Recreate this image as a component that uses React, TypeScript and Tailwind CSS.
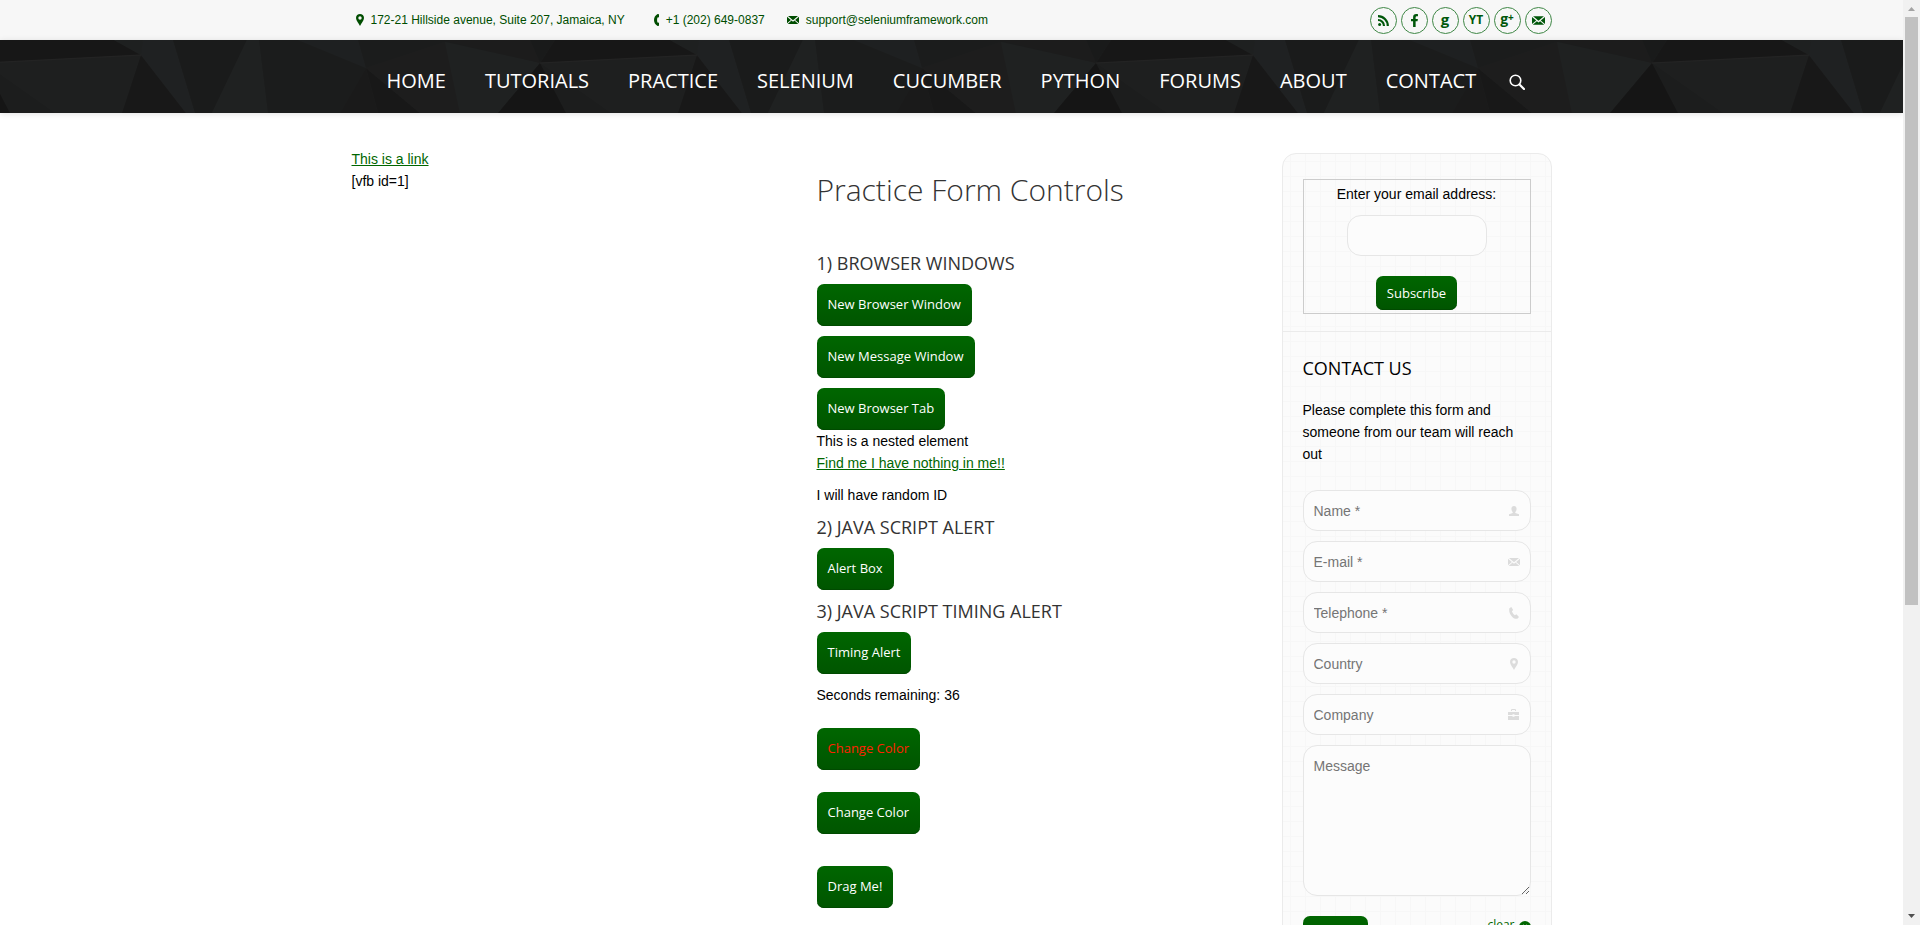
import { useState } from "react";
import type { ReactNode } from "react";
import { FaFacebookF } from "react-icons/fa";

const OPEN = "font-['Open_Sans',sans-serif]";
const BUTTON =
  "block w-fit rounded-[7px] bg-linear-to-b from-[#006600] to-[#005500] px-[11px] font-['Open_Sans',sans-serif] text-[13px] shadow-[inset_0_-1px_0_#004a00]";
const FIELD =
  "block w-full rounded-[14px] border border-[#e6e6e6] bg-[#fcfcfc] px-[10px] text-[14px] leading-[22px] text-black placeholder:text-[#757575] outline-none";

function PinIcon({ className }: { className?: string }) {
  return (
    <svg viewBox="0 0 8 12" className={className} fill="currentColor" aria-hidden="true">
      <path
        fillRule="evenodd"
        d="M4 0C1.8 0 0 1.7 0 3.9 0 6.6 2.8 9 4 12c1.200-3 4-5.400 4-8.100C8 1.700 6.200 0 4 0Zm0 2.300a1.700 1.700 0 1 1 0 3.400 1.700 1.700 0 0 1 0-3.400Z"
      />
    </svg>
  );
}

function MailIcon({ className }: { className?: string }) {
  return (
    <svg viewBox="0 0 12 8" className={className} fill="currentColor" aria-hidden="true">
      <path d="M1 0h10L6 4.200ZM0 .7 3.900 4 0 7.300ZM12 .7v6.600L8.100 4ZM4.500 4.600 6 5.800l1.500-1.200L11.300 8H.7Z" />
    </svg>
  );
}

function HandsetIcon({ className }: { className?: string }) {
  return (
    <svg viewBox="0 0 5 12" className={className} fill="currentColor" aria-hidden="true">
      <path d="M3.600 0 5 .300v2.900L3.500 3.400c-.6 1.700-.6 3.500 0 5.200l1.500.2v2.900l-1.400.3C-1.200 9.500-1.200 2.500 3.600 0Z" />
    </svg>
  );
}

function PhoneIcon({ className }: { className?: string }) {
  return (
    <svg viewBox="0 0 10 12" className={className} fill="currentColor" aria-hidden="true">
      <path d="M.4 1.200 2.300 0l1.900 3-1.300 1.200c.5 1.500 1.600 3 3 4l1.500-.9L10 10l-1.600 1.700C4.500 13-1 6.500.4 1.200Z" />
    </svg>
  );
}

function PersonIcon({ className }: { className?: string }) {
  return (
    <svg viewBox="0 0 10 10" className={className} fill="currentColor" aria-hidden="true">
      <path d="M5 0c1.700 0 2.600 1.200 2.600 2.800 0 1.500-.7 2.600-1.300 3.200v.9L10 8.300V10H0V8.300l3.700-1.400V6C3.100 5.400 2.400 4.300 2.400 2.800 2.400 1.200 3.300 0 5 0Z" />
    </svg>
  );
}

function CaseIcon({ className }: { className?: string }) {
  return (
    <svg viewBox="0 0 11 11" className={className} fill="currentColor" aria-hidden="true">
      <path fillRule="evenodd" d="M3 2V.8L3.800 0h3.400L8 .8V2H7V1H4v1ZM0 3h11v3H6.500V5.300h-2V6H0ZM0 7h4.500v.800h2V7H11v4H0Z" />
    </svg>
  );
}

function RssIcon({ className }: { className?: string }) {
  return (
    <svg viewBox="0 0 11 11" className={className} aria-hidden="true">
      <circle cx="1.600" cy="9.400" r="1.500" fill="currentColor" />
      <path d="M0 5a6 6 0 0 1 6 6M0 1.200A9.800 9.800 0 0 1 9.800 11" fill="none" stroke="currentColor" strokeWidth="2.200" />
    </svg>
  );
}

const FACETS: [string, string][] = [
  ["-1,0 114,0 141,15 -16,23", "#171717"],
  ["-16,23 141,15 122,73 55,73", "#1e1f1f"],
  ["-16,23 55,73 10,73", "#1c1d1d"],
  ["-16,23 10,73 -58,73", "#151515"],
  ["141,15 122,73 186,73", "#181818"],
  ["114,0 143,0 141,15", "#1e2020"],
  ["143,0 173,0 195,73 186,73 141,15", "#1f2122"],
  ["173,0 247,0 212,73 195,73", "#1a1b1b"],
  ["247,0 259,0 268,73 212,73", "#1f2121"],
  ["259,0 298,0 366,28 340,73 268,73", "#1b1c1c"],
  ["298,0 358,0 366,28", "#1e2021"],
  ["358,0 445,0 366,28", "#1b1c1c"],
  ["366,28 378,73 340,73", "#1a1a1a"],
  ["366,28 420,73 378,73", "#181818"],
  ["366,28 445,2 460,73 420,73", "#1d1d1d"],
  ["445,2 540,23 498,73 460,73", "#1f2121"],
  ["445,0 530,0 540,23", "#1c1c1c"],
  ["530,0 555,0 540,23", "#191a1a"],
];

function Facets() {
  return (
    <svg className="absolute inset-0 h-full w-full" aria-hidden="true">
      <defs>
        <pattern id="facets" width="556" height="73" patternUnits="userSpaceOnUse">
          <rect width="556" height="73" fill="#1b1c1c" />
          {[0, 556].map((shift) => (
            <g key={shift} transform={`translate(${shift} 0)`}>
              {FACETS.map(([points, fill]) => (
                <polygon key={points} points={points} fill={fill} />
              ))}
              <path d="M-16 23 141 15" stroke="#232323" strokeWidth="1" />
            </g>
          ))}
        </pattern>
      </defs>
      <rect width="100%" height="100%" fill="url(#facets)" />
    </svg>
  );
}

const NAV = ["HOME", "TUTORIALS", "PRACTICE", "SELENIUM", "CUCUMBER", "PYTHON", "FORUMS", "ABOUT", "CONTACT"];

const SOCIAL: { label: string; icon: ReactNode }[] = [
  { label: "RSS", icon: <RssIcon className="h-[11px] w-[11px]" /> },
  { label: "Facebook", icon: <FaFacebookF className="h-[13px] w-[13px]" /> },
  { label: "Google", icon: <span className="pb-[2px] text-[15px]">g</span> },
  { label: "YouTube", icon: <span className="text-[12px]">YT</span> },
  {
    label: "Google Plus",
    icon: (
      <span className="flex pb-[2px] text-[14px]">
        g<span className="text-[10px] leading-[10px]">+</span>
      </span>
    ),
  },
  { label: "Mail", icon: <MailIcon className="h-[9px] w-[13px]" /> },
];

const FIELDS: { label: string; type: string; icon: ReactNode }[] = [
  { label: "Name *", type: "text", icon: <PersonIcon className="h-[10px] w-[10px]" /> },
  { label: "E-mail *", type: "email", icon: <MailIcon className="h-[8px] w-[12px]" /> },
  { label: "Telephone *", type: "tel", icon: <PhoneIcon className="h-[12px] w-[10px]" /> },
  { label: "Country", type: "text", icon: <PinIcon className="h-[12px] w-[8px]" /> },
  { label: "Company", type: "text", icon: <CaseIcon className="h-[11px] w-[11px]" /> },
];

function TopBar() {
  return (
    <div className="bg-[#f7f7f7]">
      <div className="mx-auto flex h-10 max-w-[1200px] items-center justify-between">
        <ul className="flex items-center pl-1 text-[12px] text-[#004d00]">
          <li className="flex items-center gap-[7px]">
            <PinIcon className="h-[12px] w-[8px]" />
            172-21 Hillside avenue, Suite 207, Jamaica, NY
          </li>
          <li className="ml-[29px] flex items-center gap-[7px]">
            <HandsetIcon className="h-[12px] w-[5px]" />
            +1 (202) 649-0837
          </li>
          <li className="ml-[22px] flex items-center gap-[7px]">
            <MailIcon className="h-[8px] w-[12px]" />
            support@seleniumframework.com
          </li>
        </ul>
        <div className={`flex gap-1 font-bold text-[#00570a] ${OPEN}`}>
          {SOCIAL.map(({ label, icon }) => (
            <a
              key={label}
              href="#"
              aria-label={label}
              className="flex size-[27px] items-center justify-center rounded-full border border-[#3f8746] leading-none"
            >
              {icon}
            </a>
          ))}
        </div>
      </div>
    </div>
  );
}

function NavBar() {
  return (
    <header className="relative shadow-[0_1px_6px_rgba(0,0,0,0.12)]">
      <Facets />
      <nav
        className={`relative mx-auto flex h-[73px] max-w-[1200px] items-center gap-[39px] pt-[9px] pl-[35px] text-[20px] text-white ${OPEN}`}
      >
        {NAV.map((item) => (
          <a key={item} href="#">
            {item}
          </a>
        ))}
        <a href="#" aria-label="Search" className="-ml-[6px] pt-[2px]">
          <svg viewBox="0 0 16 16" className="size-4" fill="none" stroke="currentColor" aria-hidden="true">
            <circle cx="6.500" cy="6.500" r="5.300" strokeWidth="1.600" />
            <path d="M10.500 10.500 15 15" strokeWidth="2.200" strokeLinecap="round" />
          </svg>
        </a>
      </nav>
    </header>
  );
}

function SectionTitle({ children }: { children: ReactNode }) {
  return <h3 className={`my-[10px] text-[18px] leading-[22px] text-[#333] ${OPEN}`}>{children}</h3>;
}

function GreenButton({ children, className = "" }: { children: ReactNode; className?: string }) {
  return (
    <button type="button" className={`${BUTTON} h-[42px] pb-[2px] text-white ${className}`}>
      {children}
    </button>
  );
}

function Practice() {
  const [red, setRed] = useState(true);
  return (
    <section className="min-w-0 flex-1">
      <h1 className={`mt-[22px] mb-[42px] text-[30px] leading-[40px] font-light text-[#333] ${OPEN}`}>
        Practice Form Controls
      </h1>
      <SectionTitle>1) BROWSER WINDOWS</SectionTitle>
      <div className="flex flex-col gap-[10px]">
        <GreenButton>New Browser Window</GreenButton>
        <GreenButton>New Message Window</GreenButton>
        <GreenButton>New Browser Tab</GreenButton>
      </div>
      <div>This is a nested element</div>
      <a href="#" className="text-[#006600] underline">
        Find me I have nothing in me!!
      </a>
      <p className="mt-[10px]">I will have random ID</p>
      <SectionTitle>2) JAVA SCRIPT ALERT</SectionTitle>
      <GreenButton>Alert Box</GreenButton>
      <SectionTitle>3) JAVA SCRIPT TIMING ALERT</SectionTitle>
      <GreenButton>Timing Alert</GreenButton>
      <p className="mt-[10px] mb-[22px]">Seconds remaining: 36</p>
      <button
        type="button"
        onClick={() => setRed(!red)}
        className={`${BUTTON} h-[42px] pb-[2px] ${red ? "text-[#ff2200]" : "text-white"}`}
      >
        Change Color
      </button>
      <GreenButton className="mt-[22px]">Change Color</GreenButton>
      <GreenButton className="mt-[32px]">Drag Me!</GreenButton>
    </section>
  );
}

function Sidebar() {
  return (
    <aside className="mt-[5px] w-[270px] shrink-0 self-start rounded-[14px] border border-[#ebebeb] bg-[#fbfbfb] bg-[linear-gradient(to_right,#f7f7f7_1px,transparent_1px),linear-gradient(to_bottom,#f7f7f7_1px,transparent_1px)] bg-[size:15px_15px] bg-[position:7px_7px]">
      <div className="border-b border-[#ebebeb] px-5 pt-[25px] pb-[17px]">
        <form className="flex flex-col items-center border border-[#ccc] px-[3px] pt-[3px] pb-[3px]">
          <label htmlFor="subscribe-email">Enter your email address:</label>
          <div className="mt-[10px] mb-5 w-[140px]">
            <input id="subscribe-email" type="email" className={`${FIELD} h-[41px]`} />
          </div>
          <button type="button" className={`${BUTTON} h-[34px] text-white`}>
            Subscribe
          </button>
        </form>
      </div>
      <div className="px-5 pt-[25px] pb-5">
        <h2 className={`text-[18px] leading-[22px] text-black ${OPEN}`}>CONTACT US</h2>
        <p className="mt-[20px]">Please complete this form and someone from our team will reach out</p>
        <form className="mt-[25px] flex flex-col gap-[10px]">
          {FIELDS.map(({ label, type, icon }) => (
            <div key={label} className="relative">
              <input type={type} placeholder={label} aria-label={label} className={`${FIELD} h-[41px]`} />
              <span className="pointer-events-none absolute inset-y-0 right-[11px] flex w-3 items-center justify-center text-[#dcdcdc]">
                {icon}
              </span>
            </div>
          ))}
          <textarea placeholder="Message" aria-label="Message" className={`${FIELD} h-[151px] resize py-[9px]`} />
          <div className="mt-[10px] flex items-start justify-between">
            <button type="button" className={`${BUTTON} h-[34px] text-white`}>
              Submit
            </button>
            <button type="reset" className={`flex items-center gap-1 text-[12px] leading-[18px] text-[#006600] ${OPEN}`}>
              clear
              <svg viewBox="0 0 12 12" className="mt-1 size-3" aria-hidden="true">
                <circle cx="6" cy="6" r="6" fill="currentColor" />
                <path d="m4 4 4 4m0-4-4 4" stroke="#fff" strokeWidth="1.500" />
              </svg>
            </button>
          </div>
        </form>
      </div>
    </aside>
  );
}

function PageScrollbar() {
  return (
    <div className="flex w-[17px] shrink-0 flex-col items-center bg-[#f1f1f1]" aria-hidden="true">
      <svg viewBox="0 0 17 17" className="size-[17px] shrink-0">
        <path d="M5 11h7L8.500 7Z" fill="#a3a3a3" />
      </svg>
      <div className="flex w-[13px] flex-1">
        <div className="h-[66%] w-full bg-[#c1c1c1]" />
      </div>
      <svg viewBox="0 0 17 17" className="size-[17px] shrink-0">
        <path d="M5 6h7l-3.500 4Z" fill="#505050" />
      </svg>
    </div>
  );
}

export default function App() {
  return (
    <div className="flex h-screen overflow-hidden bg-white font-['Liberation_Sans',Arial,sans-serif] text-[14px] leading-[22px] text-black">
      <div className="min-w-0 flex-1 overflow-y-auto [scrollbar-width:none]">
        <TopBar />
        <NavBar />
        <main className="mx-auto flex max-w-[1200px] gap-10 pt-[35px] pb-10">
          <section className="min-w-0 flex-1">
            <a href="#" className="text-[#006600] underline">
              This is a link
            </a>
            <p>[vfb id=1]</p>
          </section>
          <Practice />
          <Sidebar />
        </main>
      </div>
      <PageScrollbar />
    </div>
  );
}
